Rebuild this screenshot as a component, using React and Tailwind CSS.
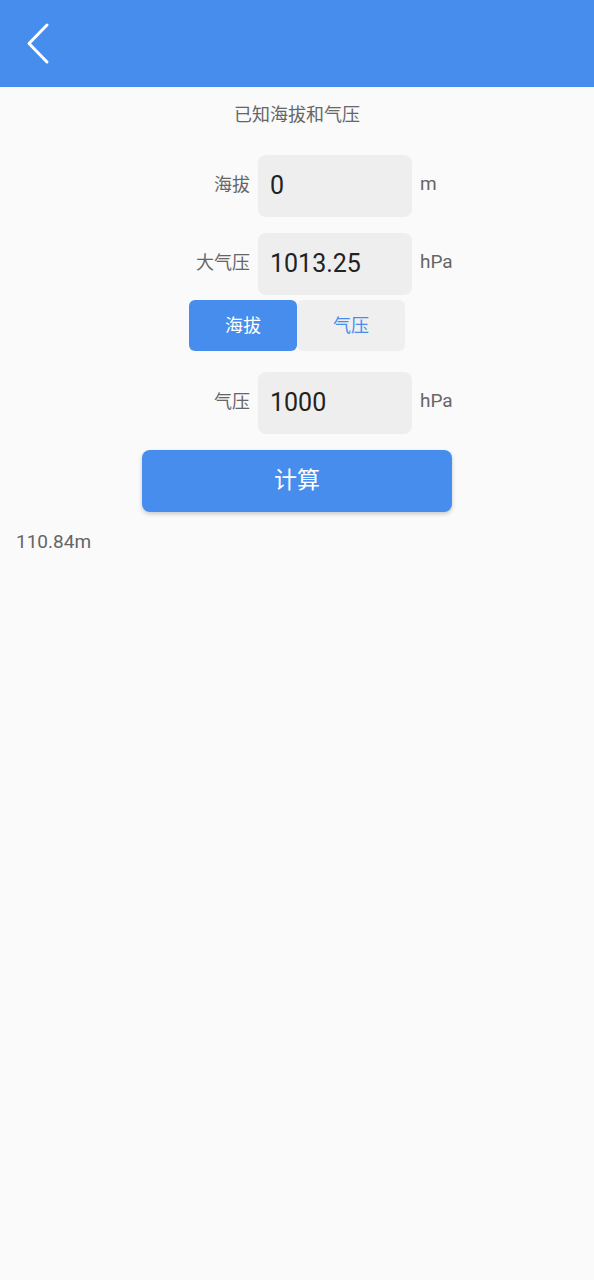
import { useState } from "react";

const font = { fontFamily: 'Roboto, "Noto Sans CJK SC", sans-serif' };

const Field = ({ label, value, unit }) => (
    <div className="grid grid-cols-[250px_154px_1fr] gap-2 items-center">
        <div className="text-right text-[18px] text-[#666666] -mt-1">{label}</div>
        <div className="h-[62px] rounded-lg bg-[#eeeeee] flex items-center px-3 text-[25px] text-[#222222]">
            {value}
        </div>
        <div className="text-[19px] text-[#666666] -mt-1">{unit}</div>
    </div>
);

const App = () => {
    const [mode, setMode] = useState(0);

    return (
        <div className="min-h-[1280px] bg-[#fafafa]" style={font}>
            <div className="h-[87px] bg-[#468ded] flex items-center">
                <svg width="60" height="87" viewBox="0 0 60 87" fill="none">
                    <polyline points="47,25 29,43.5 47,62" stroke="white" strokeWidth="3" strokeLinecap="round" strokeLinejoin="round" />
                </svg>
            </div>

            <div className="text-center text-[18px] text-[#666666] mt-[16px] leading-6">已知海拔和气压</div>

            <div className="mt-[28px]">
                <Field label="海拔" value="0" unit="m" />
            </div>
            <div className="mt-4">
                <Field label="大气压" value="1013.25" unit="hPa" />
            </div>

            <div className="mt-[5px] mx-auto w-[216px] h-[51px] grid grid-cols-2 text-[18px]">
                <button
                    onClick={() => setMode(0)}
                    className={mode === 0 ? "rounded-md bg-[#468ded] text-white" : "rounded-md bg-[#efefef] text-[#468ded]"}
                >
                    海拔
                </button>
                <button
                    onClick={() => setMode(1)}
                    className={mode === 1 ? "rounded-md bg-[#468ded] text-white" : "rounded-md bg-[#efefef] text-[#468ded]"}
                >
                    气压
                </button>
            </div>

            <div className="mt-[21px]">
                <Field label="气压" value="1000" unit="hPa" />
            </div>

            <div className="mt-4 flex justify-center">
                <button className="w-[310px] h-[62px] rounded-lg bg-[#468ded] text-white text-[23px] shadow-[0_2px_4px_rgba(0,0,0,0.2)]">
                    计算
                </button>
            </div>

            <div className="mt-[18px] px-4 text-[19px] text-[#666666] leading-6">110.84m</div>
        </div>
    );
};

export default App;
